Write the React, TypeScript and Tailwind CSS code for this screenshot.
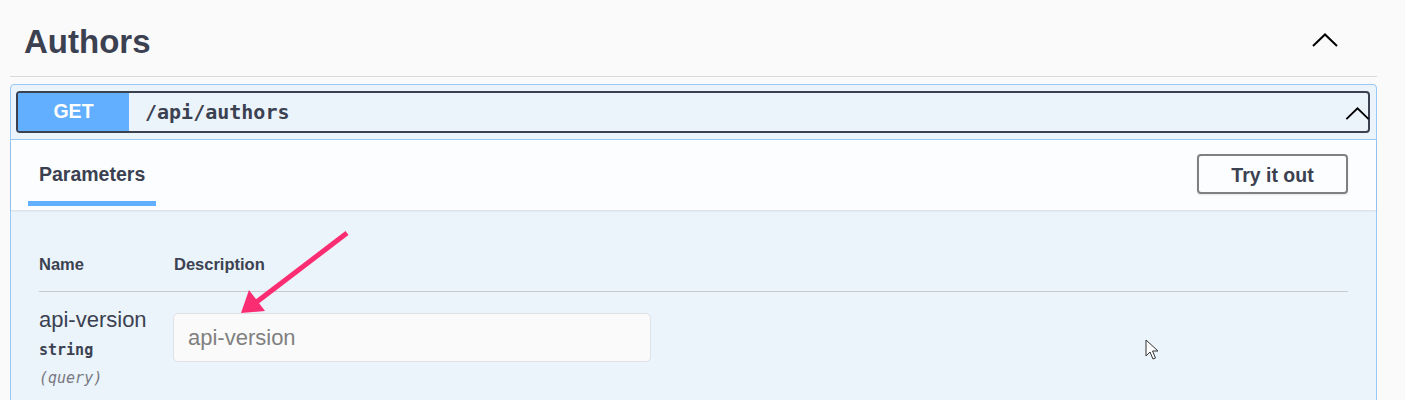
const sans = "font-['Liberation_Sans',Arial,sans-serif]";
const mono = "font-['DejaVu_Sans_Mono','Liberation_Mono',monospace]";

function ChevronUp({ className }: { className?: string }) {
  return (
    <svg viewBox="0 0 26 14" className={className} fill="none">
      <polyline points="1,13 13,1.5 25,13" stroke="#000" strokeWidth="2" />
    </svg>
  );
}

export default function App() {
  return (
    <div className={`relative h-[400px] overflow-hidden bg-[#fafafa] pl-[10px] pr-[28px] ${sans}`}>
      {/* Tag header */}
      <div className="flex h-[77px] items-center justify-between border-b border-[#d8d9dc] pl-[14px] pr-[39px]">
        <h2 className="mt-[6px] text-[33px] font-bold leading-none text-[#3b4151]">Authors</h2>
        <ChevronUp className="mt-[4px] h-[14px] w-[26px]" />
      </div>

      {/* Operation block */}
      <div className="mt-[7px] rounded-[4px] border border-[#99c7f6] bg-[#ebf3fb]">
        <div className="border-b border-[#99c7f6] pb-[6px] pl-[5px] pr-[6px] pt-[6px]">
          <div className="flex h-[42px] items-center rounded-[4px] border-2 border-[#3b4151]">
            <span className="flex h-full w-[111px] items-center justify-center rounded-l-[2px] bg-[#61affe] text-[19.5px] font-bold text-white">
              GET
            </span>
            <span className={`ml-[16px] flex-1 text-[20px] font-bold text-[#3b4151] ${mono}`}>/api/authors</span>
            <ChevronUp className="-mr-[2px] mt-[2px] h-[13px] w-[25px]" />
          </div>
        </div>

        {/* Tabs */}
        <div className="flex h-[70px] items-start justify-between bg-white/80 pl-[17px] pr-[28px] shadow-[0_1px_2px_rgba(0,0,0,0.1)]">
          <div className="flex flex-col px-[11px] pt-[22px]">
            <span className="text-[19.5px] font-bold leading-[24px] text-[#3b4151]">Parameters</span>
            <span className="mt-[15px] h-[5px] -mx-[11px] bg-[#61affe]" />
          </div>
          <button className="mt-[14px] h-[40px] w-[151px] rounded-[4px] border-2 border-[#808080] bg-transparent pt-[3px] text-[19.5px] font-bold text-[#3b4151] shadow-[0_1px_2px_rgba(0,0,0,0.1)]">
            Try it out
          </button>
        </div>

        {/* Parameters table */}
        <div className="px-[28px] pb-[40px]">
          <div className="flex border-b border-[#c8cbd0] pb-[17px] pt-[44px] text-[16.5px] font-bold leading-[20px] text-[#3b4151]">
            <span className="w-[135px]">Name</span>
            <span>Description</span>
          </div>
          <div className="flex pt-[15px]">
            <div className="w-[134px] text-[#3b4151]">
              <div className="text-[22px] leading-[26px]">api-version</div>
              <div className={`mt-[7px] text-[15px] font-bold leading-[20px] ${mono}`}>string</div>
              <div className={`mt-[8px] text-[15px] italic leading-[20px] text-[#77797f] ${mono}`}>(query)</div>
            </div>
            <input
              placeholder="api-version"
              className={`mt-[6px] h-[49px] w-[478px] rounded-[5px] border border-[#dfe1e4] bg-[#fafafa] px-[14px] text-[22px] text-[#3b4151] outline-none placeholder:text-[#808080] ${sans}`}
            />
          </div>
        </div>
      </div>

      {/* Annotation arrow */}
      <svg className="pointer-events-none absolute left-0 top-0 h-[400px] w-[1405px]" viewBox="0 0 1405 400">
        <line x1="347" y1="233" x2="254" y2="304" stroke="#fb2d72" strokeWidth="5" strokeLinecap="butt" />
        <polygon points="241,313 249,290 265,311" fill="#fb2d72" />
      </svg>

      {/* Mouse cursor */}
      <svg className="pointer-events-none absolute left-[1145px] top-[339px] h-[22px] w-[15px]" viewBox="0 0 15 22">
        <path
          d="M1 1 L1 17 L5 13 L8 20 L10.5 19 L7.5 12 L13 12 Z"
          fill="#fff"
          stroke="#333"
          strokeWidth="1"
          strokeLinejoin="round"
        />
      </svg>
    </div>
  );
}
